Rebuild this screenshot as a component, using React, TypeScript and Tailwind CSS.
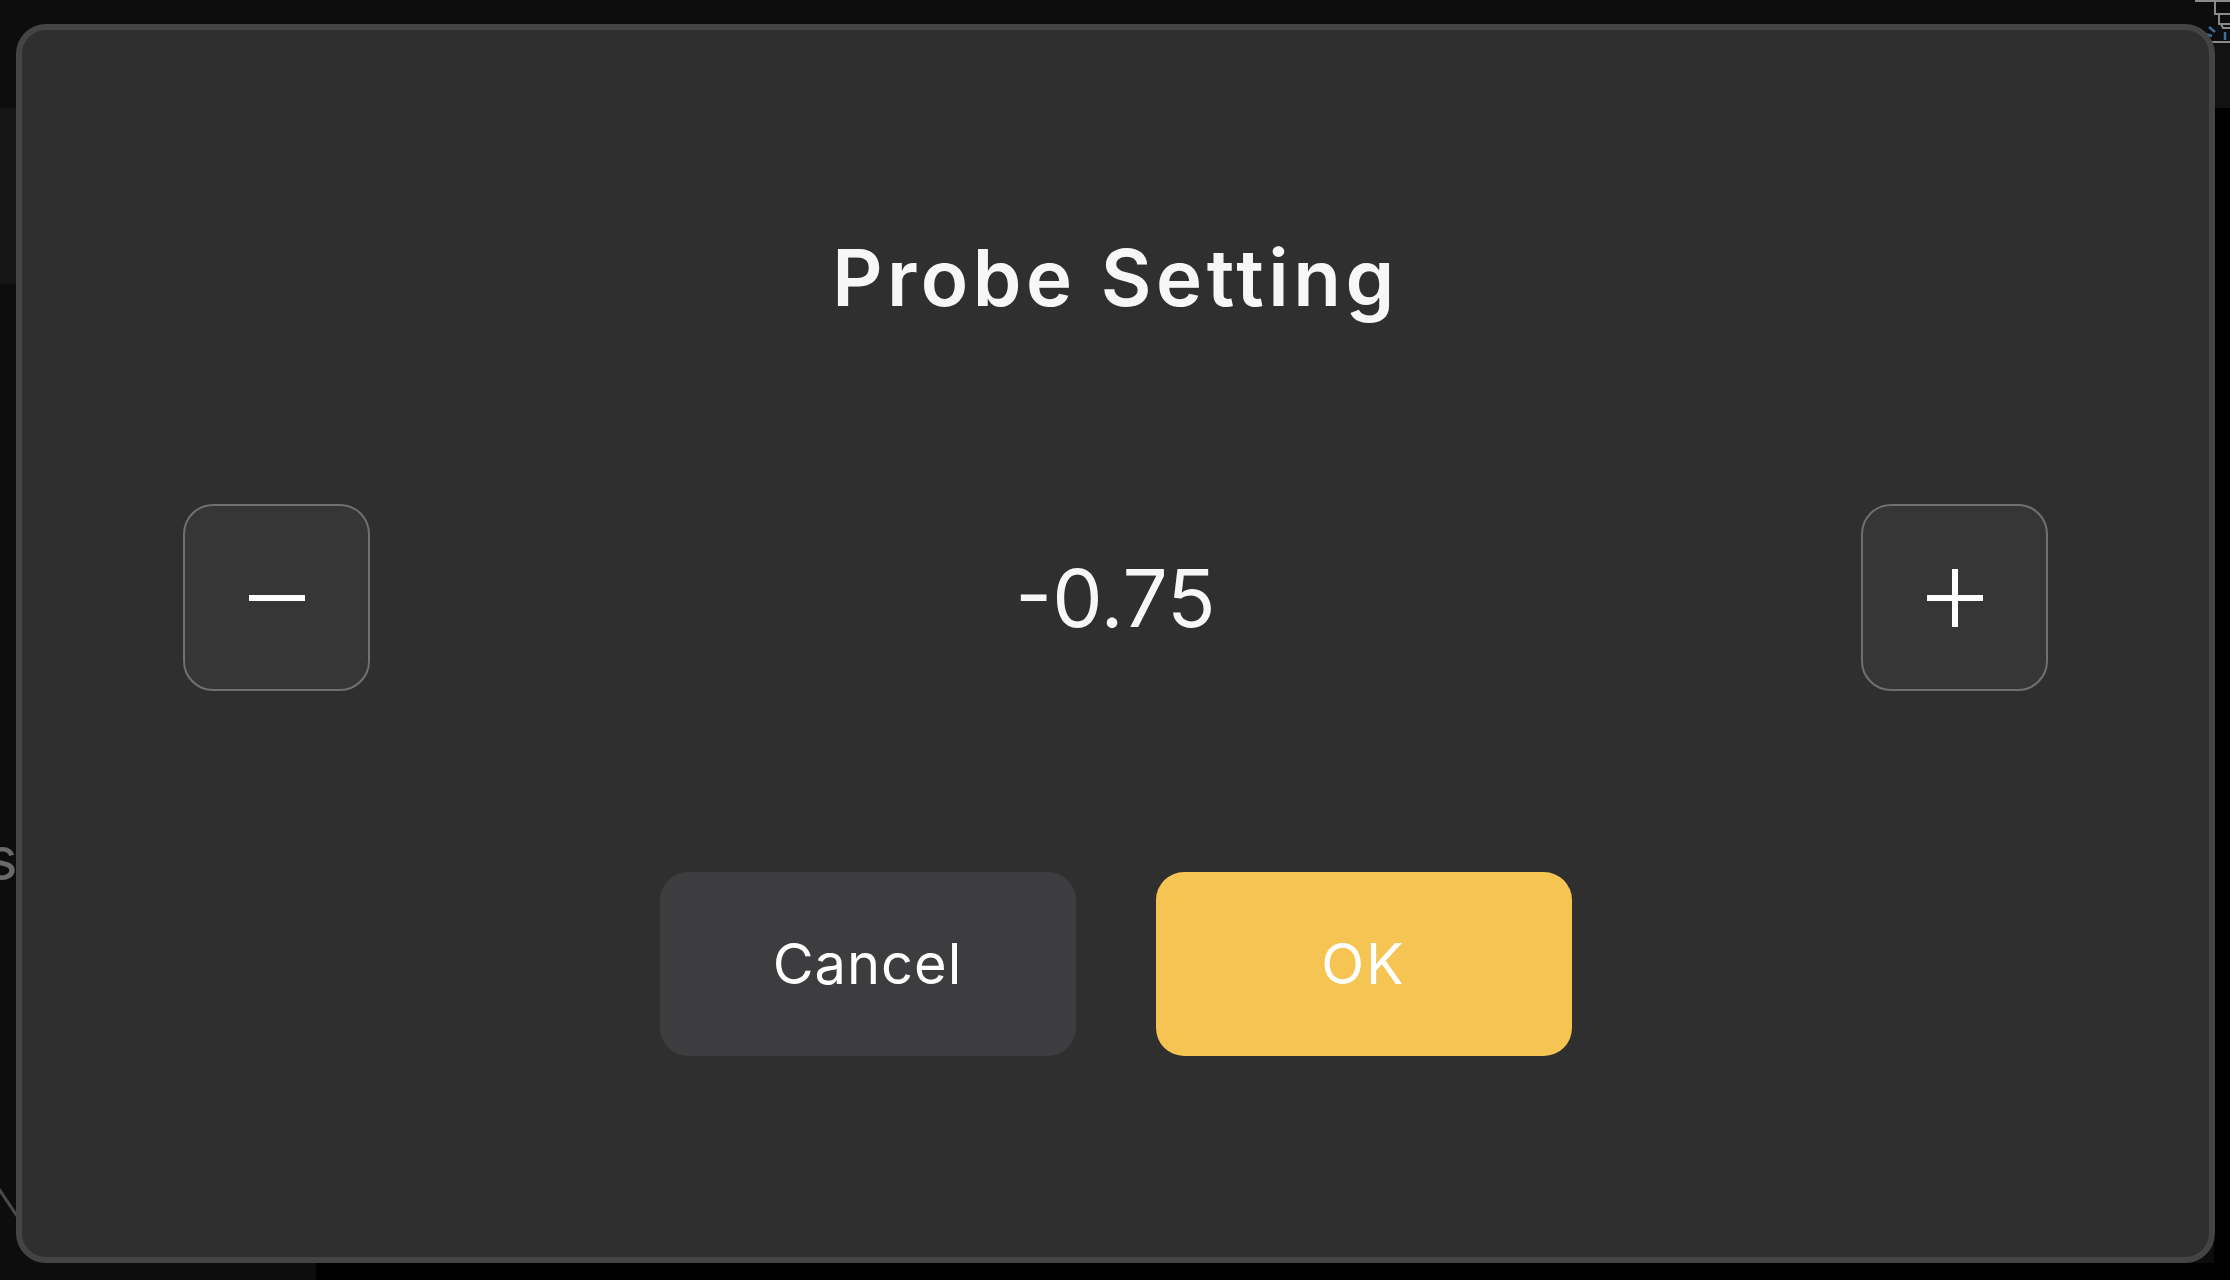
import React from "react";

const font = { fontFamily: '"Inter", "Noto Sans", sans-serif' };

function StepButton({ kind }: { kind: "minus" | "plus" }) {
  return (
    <button className="w-[187px] h-[187px] rounded-[30px] border-2 border-[#707070] bg-[#363636] flex items-center justify-center">
      <svg width="60" height="60" viewBox="0 0 60 60">
        <rect x="2" y="27" width="56" height="6" fill="#ffffff" />
        {kind === "plus" && <rect x="27" y="1" width="6" height="58" fill="#ffffff" />}
      </svg>
    </button>
  );
}

export default function App() {
  return (
    <div className="relative w-[2230px] h-[1280px] overflow-hidden bg-[#0d0d0d]" style={font}>
      {/* app underneath the dialog */}
      <div className="absolute left-0 top-[108px] w-[16px] h-[176px] bg-[#161616]" />
      <div className="absolute right-0 top-[43px] w-[16px] h-[65px] bg-[#121212]" />
      <div className="absolute right-0 top-[108px] w-[16px] h-[1172px] bg-black" />
      <div className="absolute left-[316px] bottom-0 right-0 h-[17px] bg-black" />
      <span className="absolute left-[-14px] top-[828px] text-[60px] leading-none text-[#6a6a6a]">s</span>
      <svg className="absolute left-0 top-[1186px]" width="20" height="36" viewBox="0 0 20 36">
        <line x1="-1" y1="3" x2="19" y2="33" stroke="#4a4a4a" strokeWidth="3" />
      </svg>
      <svg className="absolute left-[2195px] top-0" width="35" height="46" viewBox="0 0 35 46">
        <path d="M0 1 H35 M20 1 V14 H35 M24 14 V24 H35 M26 24 L28 28 H35" fill="none" stroke="#8a8a8a" strokeWidth="2" />
        <path d="M3 42 H35" stroke="#8a8a8a" strokeWidth="2" />
        <path d="M14 27 L20 32 M10 34 L17 36 M30 32 V40" stroke="#3b6e99" strokeWidth="2.5" />
      </svg>

      <div className="relative pl-[16px] pt-[24px]">
        <div className="w-[2199px] h-[1239px] rounded-[30px] border-[6px] border-[#444444] bg-[#2f2f2f] flex flex-col items-center">
          <h1 className="mt-[198px] h-[100px] leading-[100px] text-[78px] font-semibold text-[#f7f7f7] tracking-[4.5px]">
            Probe Setting
          </h1>

          <div className="mt-[176px] w-full px-[161px] flex items-center justify-between">
            <StepButton kind="minus" />
            <span className="text-[80px] leading-none text-[#f7f7f7]">-0.75</span>
            <StepButton kind="plus" />
          </div>

          <div className="mt-[181px] flex gap-[80px]">
            <button className="w-[416px] h-[184px] rounded-[28px] bg-[#3d3d3f] text-white text-[56px] tracking-[1px]">
              Cancel
            </button>
            <button className="w-[416px] h-[184px] rounded-[28px] bg-[#f5c452] text-white text-[56px] tracking-[2px]">
              OK
            </button>
          </div>
        </div>
      </div>
    </div>
  );
}
